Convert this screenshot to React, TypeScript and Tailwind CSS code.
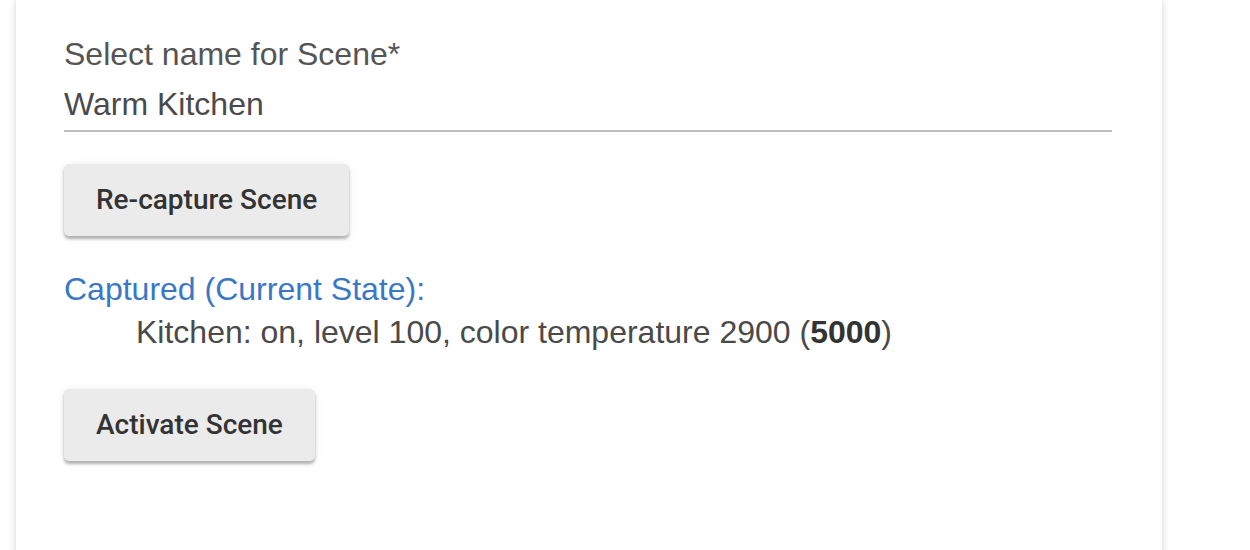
export default function App() {
  return (
    <div className="h-[550px] w-[1250px] overflow-hidden bg-white">
      <div className="ml-4 h-[600px] w-[1146px] bg-white pl-12 pt-[35px] shadow-[0_0_7px_rgba(0,0,0,0.18)] font-['Liberation_Sans',Arial,sans-serif]">
        {/* scene name field */}
        <div className="w-[1048px]">
          <label className="block text-[32px] leading-[38px] text-[#555]">Select name for Scene*</label>
          <div className="mt-3 border-b-2 border-[#bcbcbc] pb-[7px] text-[32px] leading-[38px] text-[#4a4a4a]">
            Warm Kitchen
          </div>
        </div>

        <button className="mt-[32px] h-[72px] rounded-[5px] bg-[#ebebeb] px-[32px] font-['Roboto',sans-serif] text-[28px] font-medium text-[#333] shadow-[0_3px_3px_rgba(0,0,0,0.28),0_1px_8px_rgba(0,0,0,0.08)]">
          Re-capture Scene
        </button>

        <div className="mt-[34px] text-[32px] leading-[38px] text-[#3a78c6]">Captured (Current State):</div>
        <div className="mt-[5px] pl-[72px] text-[32px] leading-[38px] text-[#4a4a4a]">
          Kitchen: on, level 100, color temperature 2900 (<b className="text-[#333]">5000</b>)
        </div>

        <button className="mt-[38px] h-[72px] rounded-[5px] bg-[#ebebeb] px-[32px] font-['Roboto',sans-serif] text-[28px] font-medium text-[#333] shadow-[0_3px_3px_rgba(0,0,0,0.28),0_1px_8px_rgba(0,0,0,0.08)]">
          Activate Scene
        </button>
      </div>
    </div>
  )
}
